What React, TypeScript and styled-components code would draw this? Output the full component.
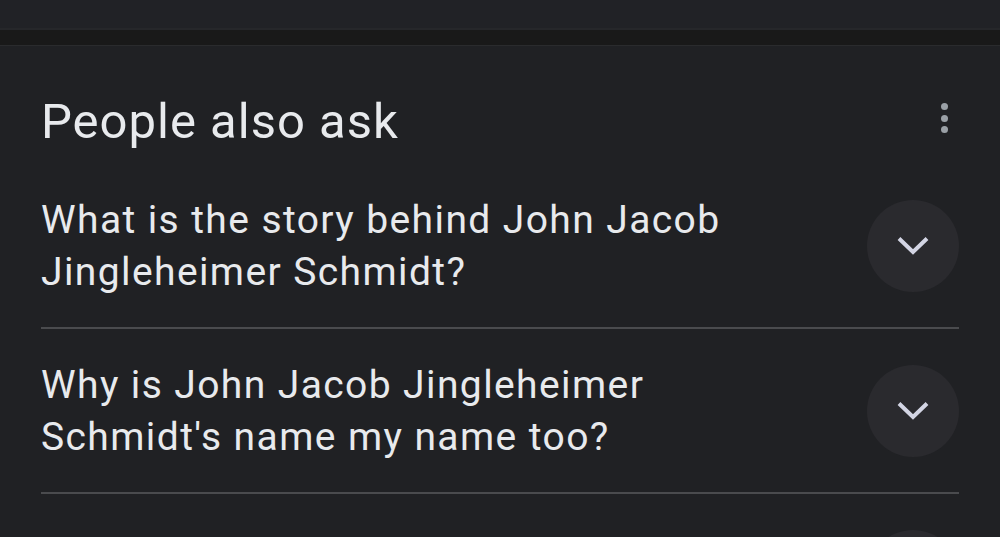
import React from "react";
import styled, { createGlobalStyle } from "styled-components";

const Global = createGlobalStyle`
  html, body {
    margin: 0;
    padding: 0;
    background: #202124;
    overflow: hidden;
  }
  body {
    font-family: Roboto, "Open Sans", Arial, sans-serif;
    color: #e8eaed;
  }
`;

const Page = styled.div`
  width: 1000px;
  height: 537px;
  overflow: hidden;
  background: #202124;
  display: flex;
  flex-direction: column;
`;

const TopBar = styled.div`
  height: 28px;
  flex: none;
  background: #212226;
  border-bottom: 2px solid #26272a;
`;

const Separator = styled.div`
  height: 15px;
  flex: none;
  background: #191919;
  border-bottom: 1px solid #2a2b2d;
`;

const Panel = styled.section`
  padding: 0 41px;
  display: flex;
  flex-direction: column;
`;

const Header = styled.div`
  height: 118px;
  box-sizing: border-box;
  padding-top: 34px;
  display: flex;
  align-items: center;
  justify-content: space-between;
`;

const Title = styled.h2`
  margin: 0;
  font-family: Roboto, "Open Sans", sans-serif;
  font-weight: 400;
  font-size: 49px;
  line-height: 56px;
  color: #e8eaed;
  letter-spacing: 1px;
`;

const Kebab = styled.button`
  width: 30px;
  height: 40px;
  padding: 0;
  border: none;
  background: transparent;
  display: flex;
  flex-direction: column;
  align-items: center;
  justify-content: center;
  gap: 4.5px;
  transform: translateY(-4px);
`;

const Dot = styled.span`
  width: 7px;
  height: 7px;
  border-radius: 50%;
  background: #9aa0a6;
`;

const Row = styled.div<{ $last?: boolean }>`
  height: 163px;
  flex: none;
  display: flex;
  align-items: center;
  justify-content: space-between;
  border-bottom: ${(p) => (p.$last ? "none" : "2px solid #4a4b4e")};
`;

const Question = styled.div`
  font-family: Roboto, "Open Sans", sans-serif;
  font-size: 39px;
  line-height: 52px;
  color: #e8eaed;
  letter-spacing: 1.4px;
`;

const ExpandButton = styled.button`
  width: 92px;
  height: 92px;
  flex: none;
  border-radius: 50%;
  border: none;
  padding: 0;
  background: #2a2a2e;
  display: flex;
  align-items: center;
  justify-content: center;
`;

const Chevron = () => (
  <svg width="36" height="36" viewBox="0 0 36 36" fill="none">
    <polyline
      points="4,10.5 18,24 32,10.5"
      stroke="#d3d5e4"
      strokeWidth="4"
      strokeLinecap="butt"
      strokeLinejoin="miter"
    />
  </svg>
);

const questions: React.ReactNode[] = [
  <>
    What is the story behind John Jacob
    <br />
    Jingleheimer Schmidt?
  </>,
  <>
    Why is John Jacob Jingleheimer
    <br />
    Schmidt's name my name too?
  </>,
  null,
];

export default function App() {
  return (
    <>
      <Global />
      <Page>
        <TopBar />
        <Separator />
        <Panel>
          <Header>
            <Title>People also ask</Title>
            <Kebab aria-label="More options">
              <Dot />
              <Dot />
              <Dot />
            </Kebab>
          </Header>
          {questions.map((q, i) => (
            <Row key={i} $last={i === questions.length - 1}>
              <Question>{q}</Question>
              <ExpandButton aria-label="Expand">
                <Chevron />
              </ExpandButton>
            </Row>
          ))}
        </Panel>
      </Page>
    </>
  );
}
